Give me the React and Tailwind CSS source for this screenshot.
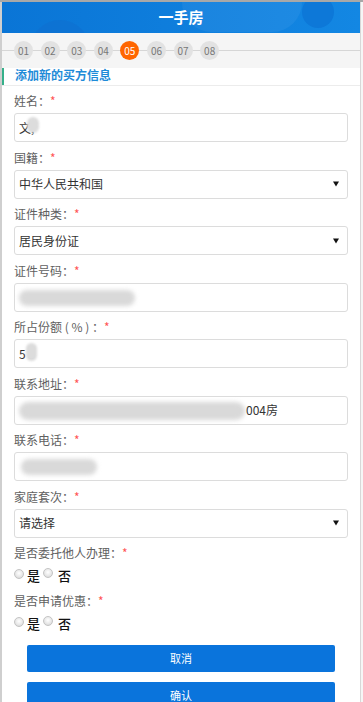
import React from "react";

const F = { fontFamily: '"Noto Sans CJK SC", "Noto Sans", sans-serif' };

function Label({ text }) {
  return (
    <div className="h-[20px] leading-[20px] text-[12px] text-[#5f5f5f] whitespace-pre">
      {text}
      <span className="text-[#f55]">*</span>
    </div>
  );
}

function Blob({ className }) {
  return <div className={"absolute rounded-full bg-[#d9d9d9] blur-[2px] " + className} />;
}

function Arrow() {
  return (
    <svg className="ml-auto mr-[4px]" width="6" height="6" viewBox="0 0 6 6">
      <path d="M0 0.5 L6 0.5 L3 5.5 Z" fill="#111" />
    </svg>
  );
}

function Field({ label, children, select }) {
  return (
    <div className="mb-[5.5px]">
      <Label text={label} />
      <div className="relative mt-[2px] h-[29px] border border-[#dcdcdc] rounded-[3px] bg-white flex items-center px-[4px] text-[12px] text-[#333]">
        {children}
        {select && <Arrow />}
      </div>
    </div>
  );
}

function Radio() {
  return (
    <span className="inline-block w-[10px] h-[10px] rounded-full border border-[#c4c4c4] bg-[radial-gradient(circle_at_50%_40%,#ffffff_0%,#e8e8e8_55%,#cfcfcf_100%)]" />
  );
}

function RadioRow() {
  return (
    <div className="h-[20px] mt-[1px] mb-[7px] flex items-center text-[13px] text-[#111] font-medium">
      <Radio />
      <span className="ml-[3px] -mb-[3px]">是</span>
      <span className="ml-[3px] -mt-[3px] flex"><Radio /></span>
      <span className="ml-[5px] -mb-[3px]">否</span>
    </div>
  );
}

export default function App() {
  const steps = ["01", "02", "03", "04", "05", "06", "07", "08"];
  return (
    <div style={F} className="w-[363px] h-[702px] overflow-hidden bg-white border-t-2 border-[#a8a8a8] flex items-start">
      <div className="w-[2px] h-full shrink-0 bg-[#cfcfcf]" />
      <div className="w-[358px] shrink-0 flex flex-col">
        <div className="relative shrink-0 h-[31px] overflow-hidden bg-gradient-to-r from-[#0a75d6] to-[#1387e3] flex items-center justify-center">
          <div className="absolute left-[28px] top-[18px] w-[60px] h-[60px] rounded-full bg-[#0f6fd0]/60" />
          <div className="absolute left-[300px] -top-[6px] w-[32px] h-[32px] rounded-full bg-[#0d78d8]" />
          <div className="absolute left-[180px] -top-[30px] w-[120px] h-[60px] rounded-full bg-white/5" />
          <span className="relative text-white text-[15px] font-bold">一手房</span>
        </div>
        <div className="relative shrink-0 h-[35px] bg-[#f5f5f5] flex items-center pl-[12px] gap-[7.6px]">
          <div className="absolute left-0 right-0 top-[17px] h-[1px] bg-[#d6d6d6]" />
          {steps.map((s) => (
            <div
              key={s}
              className={
                "relative w-[19px] h-[19px] rounded-full flex items-center justify-center text-[10px] " +
                (s === "05" ? "bg-[#ff6600] text-white" : "bg-[#e2e2e2] text-[#777]")
              }
            >
              {s}
            </div>
          ))}
        </div>
        <div className="shrink-0 h-[18px] flex items-stretch border-b border-[#ececec] bg-white">
          <div className="w-[2px] bg-[#35b08a]" />
          <div className="pl-[11px] flex items-center text-[12px] font-bold text-[#1e8bd8] leading-none -mt-[3px]">
            添加新的买方信息
          </div>
        </div>
        <div className="shrink-0 px-[12px] pt-[5px] flex flex-col">
          <Field label="姓名：">
            <span className="relative">文<span className="text-[#333]">;</span>
              <span className="absolute left-[8px] -top-[2px] w-[12px] h-[16px] rounded-full bg-[#dcdcdc] blur-[1px]" />
            </span>
          </Field>
          <Field label="国籍：" select>中华人民共和国</Field>
          <Field label="证件种类：" select>居民身份证</Field>
          <Field label="证件号码：">
            <Blob className="left-[4px] top-[6px] w-[116px] h-[16px]" />
          </Field>
          <Field label="所占份额 ( % ) ：">
            <span className="relative">5 5
              <span className="absolute left-[7px] -top-[2px] w-[11px] h-[18px] rounded-full bg-[#dcdcdc] blur-[1px]" />
            </span>
          </Field>
          <Field label="联系地址：">
            <Blob className="left-[4px] top-[5px] w-[226px] h-[18px]" />
            <span className="ml-[227px] relative">004房</span>
          </Field>
          <Field label="联系电话：">
            <Blob className="left-[6px] top-[6px] w-[76px] h-[16px]" />
          </Field>
          <Field label="家庭套次：" select>请选择</Field>
          <Label text="是否委托他人办理：" />
          <RadioRow />
          <Label text="是否申请优惠：" />
          <RadioRow />
          <div className="px-[13px] mt-[6px] flex flex-col gap-[10px]">
            <button className="h-[27px] rounded-[2px] bg-[#0a74dc] text-white text-[11px]">取消</button>
            <button className="h-[27px] rounded-[2px] bg-[#0a74dc] text-white text-[11px]">确认</button>
          </div>
        </div>
      </div>
      <div className="w-[1px] h-full shrink-0 bg-[#d8d8d8]" />
      <div className="w-[2px] h-full shrink-0 bg-[#f6f6f6]" />
    </div>
  );
}
